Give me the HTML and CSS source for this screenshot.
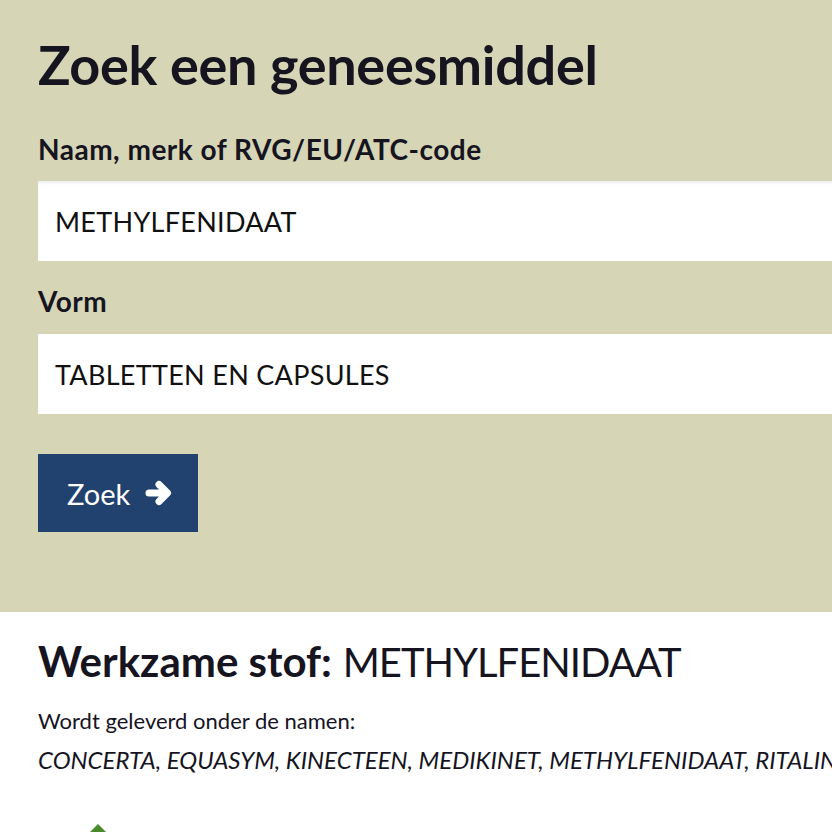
FILE: index.html
```html
<!DOCTYPE html>
<html lang="nl">
<head>
<meta charset="utf-8">
<title>Zoek een geneesmiddel</title>
<link rel="stylesheet" href="styles.css">
</head>
<body>
<section class="search">
  <h1 class="title">Zoek een geneesmiddel</h1>
  <form class="form">
    <label class="label" for="naam">Naam, merk of RVG/EU/ATC-code</label>
    <input class="field" id="naam" type="text" value="METHYLFENIDAAT">
    <label class="label label-vorm" for="vorm">Vorm</label>
    <div class="field select" id="vorm">TABLETTEN EN CAPSULES</div>
    <button class="button" type="button">
      <span>Zoek</span>
      <svg class="arrow" viewBox="0 0 28 30" width="28" height="30" aria-hidden="true"><path d="M4 15H21.5M14 6.5L22.5 15L14 23.5" fill="none" stroke="#fff" stroke-width="7" stroke-linecap="round" stroke-linejoin="round"/></svg>
    </button>
  </form>
</section>
<section class="result">
  <h2 class="substance"><strong>Werkzame stof:</strong> <span class="substance-name">METHYLFENIDAAT</span></h2>
  <p class="intro">Wordt geleverd onder de namen:</p>
  <p class="names">CONCERTA, EQUASYM, KINECTEEN, MEDIKINET, METHYLFENIDAAT, RITALIN</p>
  <svg class="leaf" viewBox="0 0 40 40" width="40" height="40" aria-hidden="true"><path fill="#4a8a2b" d="M20 2 L36 18 L20 38 L4 18 Z"/></svg>
</section>
</body>
</html>
```

FILE: styles.css
```css
html, body {
  margin: 0;
  padding: 0;
  overflow: hidden;
  background: #fff;
}

body {
  font-family: Lato, "Open Sans", sans-serif;
  color: #15141f;
  width: 1100px;
}

.search {
  background: #d6d5b6;
  padding: 33px 0 80px 38px;
}

.title {
  margin: 0;
  font-size: 54px;
  line-height: 64px;
  font-weight: 700;
  letter-spacing: -0.3px;
}

.form {
  display: flex;
  flex-direction: column;
  align-items: flex-start;
  margin-top: 35px;
}

.label {
  font-size: 28px;
  font-weight: 700;
  line-height: 34px;
  letter-spacing: 0.5px;
  margin-bottom: 15px;
}

.label-vorm {
  margin-top: 23px;
  margin-bottom: 16px;
}

.field {
  box-sizing: border-box;
  width: 1000px;
  height: 80px;
  border: 0;
  margin: 0;
  padding: 0 17px;
  background: #fff;
  font-family: Lato, "Open Sans", sans-serif;
  font-size: 27px;
  letter-spacing: 0.3px;
  color: #111;
  box-shadow: inset 0 3px 3px -1px rgba(0, 0, 0, 0.08);
  outline: none;
}

.select {
  display: flex;
  align-items: center;
  box-shadow: none;
}

.button {
  margin-top: 40px;
  display: flex;
  align-items: center;
  gap: 15px;
  height: 78px;
  width: 160px;
  padding: 0 0 0 29px;
  border: 0;
  background: #21426f;
  color: #fff;
  font-family: Lato, "Open Sans", sans-serif;
  font-size: 29px;
}

.arrow {
  display: block;
}

.result {
  padding: 23px 0 0 38px;
}

.substance {
  margin: 0;
  font-size: 42px;
  line-height: 52px;
  font-weight: 400;
}

.substance strong {
  font-weight: 700;
}

.substance-name {
  font-size: 40px;
  letter-spacing: -1px;
}

.intro {
  margin: 19px 0 0;
  font-size: 22px;
  line-height: 28px;
}

.names {
  margin: 10px 0 0;
  font-size: 24px;
  line-height: 30px;
  font-style: italic;
  white-space: nowrap;
}

.leaf {
  display: block;
  margin: 47px 0 0 40px;
}
```
